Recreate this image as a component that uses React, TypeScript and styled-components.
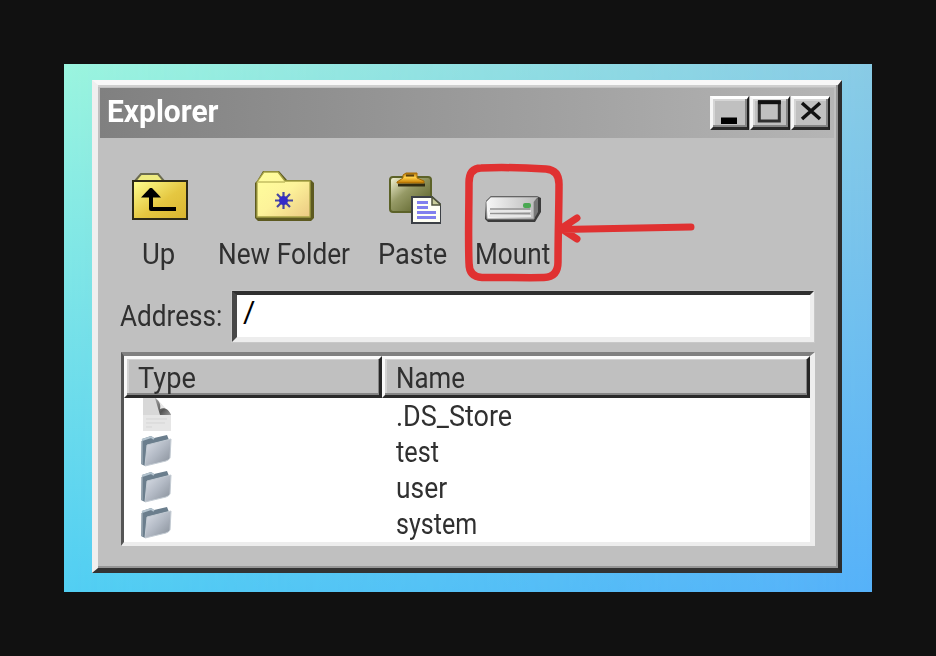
import React, { useLayoutEffect, useRef, useState } from "react";
import styled, { createGlobalStyle } from "styled-components";

const GlobalStyle = createGlobalStyle`
  * { box-sizing: border-box; }
  body {
    margin: 0;
    background: #111111;
    font-family: Roboto, "Liberation Sans", sans-serif;
    font-size: 30px;
    color: #303030;
    overflow: hidden;
  }
`;

const Page = styled.main`
  width: 936px;
  height: 656px;
  padding: 64px;
  background: #111111;
`;

const Desktop = styled.div`
  position: relative;
  width: 808px;
  height: 528px;
  padding: 16px 30px 18px 28px;
  background: linear-gradient(to bottom, #9bf5df, #52cff3);

  &::before {
    content: "";
    position: absolute;
    inset: 0;
    background: linear-gradient(to bottom, #89cbe5, #56b1f9);
    mask-image: linear-gradient(to right, transparent, #000);
  }
`;

const Window = styled.section`
  position: relative;
  width: 750px;
  height: 493px;
  background: #c0c0c0;
  border-style: solid;
  border-width: 5px 4px 5px 6px;
  border-color: #f8f8f8 #2c2c2c #333333 #efefef;
  padding: 3px 4px 0 2px;
  box-shadow: inset -2px -2px 0 #969696, inset 0 2px 0 #cfcfcf;
`;

const TitleBar = styled.header`
  display: flex;
  justify-content: space-between;
  align-items: flex-start;
  height: 50px;
  padding: 8px 4px 0 7px;
  background: linear-gradient(to right, #808080, #b5b5b5);
`;

const Title = styled.h1`
  margin: 0;
  font-size: 31px;
  line-height: 32px;
  font-weight: 700;
  color: #ffffff;
`;

const Controls = styled.div`
  display: flex;
  gap: 1px;
`;

const ControlButton = styled.button`
  width: 39.4px;
  height: 34px;
  padding: 0;
  background: #c0c0c0;
  border-style: solid;
  border-width: 3px 2px 3px 3px;
  border-color: #ffffff #1d1d1d #2a2a2a #f6f6f6;
  box-shadow: inset -2px -2px 0 #858585, inset 2px 2px 0 #d5d5d5;
  svg { display: block; }
`;

const Toolbar = styled.nav`
  display: grid;
  grid-template-columns: 64px 130px 68px 74px;
  gap: 29px;
  padding: 30px 0 0 26px;
  height: 153px;
`;

const Tool = styled.div`
  display: flex;
  flex-direction: column;
  align-items: center;
  svg { display: block; }
`;

const ToolLabel = styled.div`
  margin-top: 12px;
  line-height: 36px;
`;

const AddressRow = styled.label`
  display: flex;
  align-items: flex-start;
  height: 61px;
  padding-left: 20px;
`;

const AddressLabel = styled.div`
  width: 112px;
  padding-top: 7px;
  line-height: 36px;
`;

const AddressField = styled.div`
  width: 582px;
  height: 51px;
  padding: 0 6px;
  line-height: 34px;
  color: #000000;
  background: #ffffff;
  border-style: solid;
  border-width: 4px 4px 5px 5px;
  border-color: #303030 #eeeeee #ededed #484848;
  box-shadow: 0 0 0 1px rgba(205, 205, 205, 0.6);
`;

const FileList = styled.div`
  width: 694px;
  height: 194px;
  margin-left: 21px;
  background: #ffffff;
  border-style: solid;
  border-width: 4px 5px 4px 3px;
  border-color: #808080 #eeeeee #ededed #555555;
`;

const HeaderRow = styled.div`
  display: grid;
  grid-template-columns: 258px 428px;
`;

const HeaderCell = styled.div`
  height: 42px;
  padding: 1px 0 0 11px;
  line-height: 36px;
  background: #c0c0c0;
  border: 3px solid;
  border-color: #fafafa #262626 #2a2a2a #f8f8f8;
  box-shadow: inset -1px -2px 0 #858585, inset 2px 1px 0 #d2d2d2;
`;

const FileRow = styled.div`
  display: grid;
  grid-template-columns: 256px 1fr;
  height: 36px;
  padding-left: 16px;
  line-height: 36px;
  svg { display: block; }
`;

const FittedText = styled.span`
  display: inline-block;
  white-space: pre;
  transform-origin: left center;
`;

const FittedBox = styled.span<{ $width: number }>`
  display: block;
  width: ${(p) => p.$width}px;
  white-space: nowrap;
`;

/** Condenses a label horizontally to the width of the bitmap typeface. */
function Fit({ width, children }: { width: number; children: string }) {
  const ref = useRef<HTMLSpanElement>(null);
  const [scale, setScale] = useState(1);
  useLayoutEffect(() => {
    if (ref.current) setScale(width / ref.current.offsetWidth);
  }, [width]);
  return (
    <FittedBox $width={width}>
      <FittedText ref={ref} style={{ transform: `scaleX(${scale})` }}>
        {children}
      </FittedText>
    </FittedBox>
  );
}

const UpIcon = () => (
  <svg width="60" height="56" viewBox="-2 0 60 56">
    <defs>
      <linearGradient id="up" x1="0" y1="0" x2="1" y2="1">
        <stop offset="0" stopColor="#ffff90" />
        <stop offset=".55" stopColor="#e5c741" />
        <stop offset="1" stopColor="#d9b52f" />
      </linearGradient>
    </defs>
    <path d="M5 13 11 6H28L34 13Z" fill="#efec80" stroke="#6c6c50" strokeWidth="2" />
    <rect x="3" y="13" width="54" height="38" fill="url(#up)" stroke="#2e2b18" strokeWidth="2" />
    <path d="M21 26V41H46" fill="none" stroke="#000" strokeWidth="4" strokeLinejoin="round" />
    <path d="M11 29.500 20 20H22L31 29.500Z" fill="#000" />
  </svg>
);

const NewFolderIcon = () => (
  <svg width="62" height="56" viewBox="0 0 62 56">
    <defs>
      <linearGradient id="nf" x1="0" y1="0" x2="1" y2="1">
        <stop offset="0" stopColor="#ffff9c" />
        <stop offset=".5" stopColor="#fdf39a" />
        <stop offset="1" stopColor="#ebc983" />
      </linearGradient>
    </defs>
    <path d="M4 13 10 3H26L34 12H58L61 15V50L58 53H5L2 50V15Z" fill="#5d5a20" />
    <path d="M4 14 11 4H25L32 13H57V49H4Z" fill="url(#nf)" stroke="#a5a145" strokeWidth="1.3" />
    <path d="M5 14H32" stroke="#c3be62" strokeWidth="1.5" />
    <path d="M30.500 24V41M22 32.500H40M24 26 37 39M37 26 24 39" stroke="#4746a0" strokeWidth="2.2" />
    <circle cx="30.5" cy="32.500" r="4.500" fill="#332bc8" />
  </svg>
);

const PasteIcon = () => (
  <svg width="58" height="56" viewBox="-2 0 58 56">
    <defs>
      <linearGradient id="board" x1="0" y1="0" x2="1" y2="1">
        <stop offset="0" stopColor="#f7f6d8" />
        <stop offset=".4" stopColor="#969a66" />
        <stop offset="1" stopColor="#4f561c" />
      </linearGradient>
      <linearGradient id="clip" x1="0" y1="0" x2="0" y2="1">
        <stop offset="0" stopColor="#b07508" />
        <stop offset=".45" stopColor="#ffcf48" />
        <stop offset="1" stopColor="#c17a00" />
      </linearGradient>
    </defs>
    <rect x="5" y="9" width="41" height="35" rx="3" fill="url(#board)" stroke="#5c6228" strokeWidth="2" />
    <path d="M13 17H40" stroke="#302c12" strokeWidth="3" />
    <path d="M12 14 18 10V7L21 5H32V10L39 13V15H12Z" fill="url(#clip)" stroke="#a66a05" />
    <path d="M21 7.500H29" stroke="#594010" strokeWidth="2" />
    <path d="M27 29H47L56 37V55H27Z" fill="#fffff4" stroke="#3c4046" strokeWidth="2" />
    <path d="M47 29V37H56Z" fill="#c9cc9b" stroke="#50543c" strokeWidth="1.5" />
    <path d="M32 34.500H43M32 39.500H43M32 44.500H51M32 49.500H51" stroke="#8280ee" strokeWidth="3" />
  </svg>
);

const DriveIcon = () => (
  <svg width="58" height="56" viewBox="-1 0 58 56">
    <defs>
      <linearGradient id="drive" x1="0" y1="0" x2="1" y2="0">
        <stop offset="0" stopColor="#f7f7f7" />
        <stop offset="1" stopColor="#bababa" />
      </linearGradient>
    </defs>
    <path d="M2 33 7 28H53L57 30V44L51 54H4L1 51Z" fill="#3c3c3c" />
    <path d="M2 34 7 29H54L50 34V51H3Z" fill="url(#drive)" stroke="#8f8f8f" />
    <path d="M50 34 54 30V44L50 51Z" fill="#777" />
    <path d="M6 41H46M6 45.500H46" stroke="#929292" strokeWidth="1.6" />
    <path d="M5 43H47M5 48H47" stroke="#e7e7e7" strokeWidth="2" />
    <rect x="39" y="35" width="8" height="5" rx="2" fill="#4aa852" />
  </svg>
);

const FolderIcon = () => (
  <svg width="34" height="36" viewBox="0 1 34 36">
    <defs>
      <linearGradient id="folder" x1="0" y1="0" x2="1" y2="1">
        <stop offset="0" stopColor="#dce1e9" />
        <stop offset=".5" stopColor="#b2b9c4" />
        <stop offset="1" stopColor="#858d97" />
      </linearGradient>
    </defs>
    <path d="M2 6 11 3 14 5 27 2 29 7V24L5 33 1 31Z" fill="#6b7e8d" />
    <path d="M2 7 11 4 14 6" fill="none" stroke="#b4c4cf" strokeWidth="2" />
    <path d="M2 8V31" stroke="#9baab5" strokeWidth="1.5" />
    <path d="M7 12 31 6 30 25Q29 27 26 28L5 33Z" fill="url(#folder)" stroke="#c3cbd3" strokeWidth="1" />
  </svg>
);

const FileIcon = () => (
  <svg width="34" height="36" viewBox="0 0 34 36">
    <defs>
      <linearGradient id="fold" x1="0" y1="0" x2="1" y2="1">
        <stop offset="0" stopColor="#a5a5a5" />
        <stop offset=".6" stopColor="#555" />
        <stop offset="1" stopColor="#999" />
      </linearGradient>
    </defs>
    <path d="M3 0H16L31 16V33H3Z" fill="#e6e6e6" />
    <path d="M3 0H16L20 9V17H3Z" fill="#d8d8d8" />
    <path d="M15 0C20 3 21 8 20 11C25 9 29 12 31 17H20Z" fill="url(#fold)" />
    <path d="M6 21H27M6 25H25M6 29H12" stroke="#d5d5d5" />
  </svg>
);

const Annotation = styled.svg`
  position: absolute;
  left: 366px;
  top: 75px;
  pointer-events: none;
`;

const tools = [
  { label: "Up", width: 33, icon: <UpIcon /> },
  { label: "New Folder", width: 132, icon: <NewFolderIcon /> },
  { label: "Paste", width: 69, icon: <PasteIcon /> },
  { label: "Mount", width: 75, icon: <DriveIcon /> },
];

const files = [
  { name: ".DS_Store", width: 116, icon: <FileIcon /> },
  { name: "test", width: 43, icon: <FolderIcon /> },
  { name: "user", width: 51, icon: <FolderIcon /> },
  { name: "system", width: 81, icon: <FolderIcon /> },
];

export default function App() {
  return (
    <Page>
      <GlobalStyle />
      <Desktop>
        <Window>
          <TitleBar>
            <Title><Fit width={112}>Explorer</Fit></Title>
            <Controls>
              <ControlButton aria-label="Minimize">
                <svg width="34" height="28" viewBox="0 0 34 28"><path d="M8 18.500H24V25H8Z" fill="#000" /></svg>
              </ControlButton>
              <ControlButton aria-label="Maximize">
                <svg width="34" height="28" viewBox="0 0 34 28">
                  <rect x="6.3" y="3" width="20" height="19" fill="none" stroke="#303030" strokeWidth="3" />
                  <path d="M5 3.2H27.800" stroke="#111" strokeWidth="4" />
                </svg>
              </ControlButton>
              <ControlButton aria-label="Close">
                <svg width="34" height="28" viewBox="0 0 34 28">
                  <path d="M8 4 26 20M26 4 8 20" stroke="#111" strokeWidth="3.5" />
                </svg>
              </ControlButton>
            </Controls>
          </TitleBar>
          <Toolbar>
            {tools.map((t) => (
              <Tool key={t.label}>
                {t.icon}
                <ToolLabel><Fit width={t.width}>{t.label}</Fit></ToolLabel>
              </Tool>
            ))}
          </Toolbar>
          <AddressRow>
            <AddressLabel><Fit width={102}>Address:</Fit></AddressLabel>
            <AddressField><Fit width={12}>/</Fit></AddressField>
          </AddressRow>
          <FileList>
            <HeaderRow>
              <HeaderCell><Fit width={58}>Type</Fit></HeaderCell>
              <HeaderCell><Fit width={69}>Name</Fit></HeaderCell>
            </HeaderRow>
            {files.map((f) => (
              <FileRow key={f.name}>
                {f.icon}
                <Fit width={f.width}>{f.name}</Fit>
              </FileRow>
            ))}
          </FileList>
          <Annotation width="236" height="124" viewBox="0 0 236 124" fill="none" stroke="#e03131" strokeLinecap="round" strokeLinejoin="round">
            <path d="M17 8C40 7 65 8 82 9Q95 10 95 24C95 47 94 76 94 102Q94 117 80 117.500C57 118 36 117 18 117.500Q5 117 5 103C4 76 5 49 5 23Q5 8 17 8Z" strokeWidth="7.500" />
            <path d="M227 67C185 67.500 143 68.500 98 69.500M113 58 97 68.500 113 79" strokeWidth="7" />
          </Annotation>
        </Window>
      </Desktop>
    </Page>
  );
}
